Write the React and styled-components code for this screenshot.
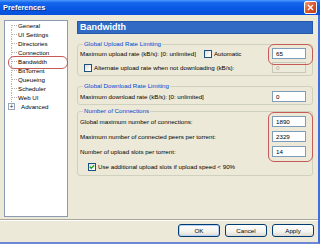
import React from 'react';
import styled, { createGlobalStyle } from 'styled-components';

const GlobalStyle = createGlobalStyle`
  html, body {
    margin: 0;
    padding: 0;
    background: #ECE9D8;
  }
  body {
    font-family: "Liberation Sans", Arial, sans-serif;
    font-size: 6.2px;
    color: #000;
  }
`;

const Window = styled.div`
  position: relative;
  width: 320px;
  height: 244px;
  display: flex;
  flex-direction: column;
  background: #ECE9D8;
  overflow: hidden;
`;

const TitleBar = styled.div`
  height: 15px;
  flex: none;
  display: flex;
  align-items: center;
  justify-content: space-between;
  padding: 0 3px 0 3px;
  box-sizing: border-box;
  background: linear-gradient(#4f9bff 0%, #1466ec 18%, #0a58e4 55%, #0650dc 100%);
  color: #fff;
  font-weight: bold;
  font-size: 7.4px;
  text-shadow: 1px 1px 0 #0a2f90;
`;

const CloseButton = styled.div`
  width: 11px;
  height: 11px;
  border: 1px solid #fff;
  border-radius: 2px;
  background: linear-gradient(135deg, #f0a07a 0%, #e0582e 45%, #c43c18 100%);
  display: flex;
  align-items: center;
  justify-content: center;
`;

const Body = styled.div`
  flex: 1;
  display: flex;
  flex-direction: column;
  border-right: 2px solid #3d6fe0;
  border-bottom: 2px solid #6d86d6;
`;

const Main = styled.div`
  display: flex;
  gap: 9px;
  padding: 5px 5px 0 4px;
`;

const Tree = styled.div`
  width: 64px;
  height: 197px;
  box-sizing: border-box;
  background: #fff;
  border: 1px solid #8b9ab3;
`;

const TreeItem = styled.div`
  height: 9px;
  display: flex;
  align-items: center;
  line-height: 9px;
  white-space: nowrap;
`;

const Branch = styled.span`
  position: relative;
  width: 6px;
  height: 9px;
  margin-left: 6px;
  margin-right: 1px;
  flex: none;
  &::before {
    content: "";
    position: absolute;
    left: 0;
    top: ${p => (p.$first ? '4px' : '0')};
    bottom: 0;
    border-left: 1px dotted #b4b4b4;
  }
  &::after {
    content: "";
    position: absolute;
    left: 1px;
    right: 0;
    top: 4px;
    border-top: 1px dotted #b4b4b4;
  }
`;

const PlusBox = styled.span`
  width: 7px;
  height: 7px;
  margin-left: 3px;
  margin-right: 6px;
  box-sizing: border-box;
  border: 1px solid #9aa5b8;
  background: #fff;
  display: flex;
  align-items: center;
  justify-content: center;
  font-size: 7px;
  line-height: 5px;
  color: #333;
  flex: none;
`;

const Content = styled.div`
  flex: 1;
  display: flex;
  flex-direction: column;
  padding-top: 1px;
`;

const Header = styled.div`
  height: 13px;
  background: #316ac5;
  border: 1px solid #2757a8;
  box-sizing: border-box;
  color: #fff;
  font-weight: bold;
  font-size: 9px;
  line-height: 11px;
  padding-left: 2px;
  margin-bottom: 6px;
`;

const Group = styled.fieldset`
  margin: 0 0 ${p => p.$after}px 0;
  padding: ${p => p.$top}px 0 ${p => p.$bottom}px 2px;
  border: 1px solid #d0d0bf;
  border-radius: 3px;
  display: flex;
  flex-direction: column;
  gap: ${p => p.$gap}px;
`;

const Legend = styled.legend`
  color: #0046d5;
  padding: 0 1px;
  margin-left: 3px;
  line-height: 8px;
  font-size: 6.2px;
`;

const Row = styled.div`
  height: 11px;
  display: flex;
  align-items: center;
  padding-left: ${p => p.$indent || 0}px;
`;

const Label = styled.span`
  white-space: nowrap;
`;

const Spacer = styled.span`
  flex: 1;
`;

const Check = styled.span`
  width: 8px;
  height: 8px;
  box-sizing: border-box;
  border: 1px solid #1c5180;
  background: linear-gradient(135deg, #dcdcd7 0%, #fff 80%);
  margin-right: 2px;
  flex: none;
  display: flex;
  align-items: center;
  justify-content: center;
`;

const Input = styled.div`
  width: 34px;
  height: 11px;
  box-sizing: border-box;
  border: 1px solid ${p => (p.$disabled ? '#c9c7ba' : '#7f9db9')};
  background: ${p => (p.$disabled ? '#ebeadb' : '#fff')};
  color: ${p => (p.$disabled ? '#aca899' : '#000')};
  padding-left: 3px;
  line-height: 9px;
  margin-right: 6px;
  flex: none;
`;

const AutoCheck = styled.span`
  display: flex;
  align-items: center;
  margin-left: 8px;
`;

const Footer = styled.div`
  margin-top: auto;
  border-top: 1px solid #aca899;
  box-shadow: inset 0 1px 0 #fff;
  display: flex;
  justify-content: flex-end;
  gap: 5px;
  padding: 4px 4px 5px 0;
`;

const Button = styled.button`
  width: 42px;
  height: 13px;
  padding: 0;
  border: 1px solid #003c74;
  border-radius: 3px;
  background: linear-gradient(#fff 0%, #f4f3ee 60%, #dcdad0 100%);
  font-family: "Liberation Sans", Arial, sans-serif;
  font-size: 6.2px;
  color: #000;
  box-shadow: ${p => (p.$default ? 'inset 0 0 0 1px #b8d0f6' : 'none')};
`;

const Mark = styled.div`
  position: absolute;
  border: 1.3px solid #c65a57;
  border-radius: 6px;
  pointer-events: none;
`;

const treeItems = ['General', 'UI Settings', 'Directories', 'Connection', 'Bandwidth', 'BitTorrent', 'Queueing', 'Scheduler', 'Web UI'];

const CheckMark = () => (
  <svg width="6" height="6" viewBox="0 0 6 6">
    <path d="M0.8 2.8 L2.3 4.3 L5.2 1.2" fill="none" stroke="#21a121" strokeWidth="1.3" />
  </svg>
);

const App = () => (
  <Window>
    <GlobalStyle />
    <TitleBar>
      <span>Preferences</span>
      <CloseButton>
        <svg width="7" height="7" viewBox="0 0 7 7">
          <path d="M1 1 L6 6 M6 1 L1 6" stroke="#fff" strokeWidth="1.4" />
        </svg>
      </CloseButton>
    </TitleBar>
    <Body>
      <Main>
        <Tree>
          {treeItems.map((t, i) => (
            <TreeItem key={t}>
              <Branch $first={i === 0} />
              {t}
            </TreeItem>
          ))}
          <TreeItem>
            <PlusBox>+</PlusBox>
            Advanced
          </TreeItem>
        </Tree>
        <Content>
          <Header>Bandwidth</Header>
          <Group $top={0} $bottom={2} $gap={3} $after={6}>
            <Legend>Global Upload Rate Limiting</Legend>
            <Row>
              <Label>Maximum upload rate (kB/s): [0: unlimited]</Label>
              <AutoCheck>
                <Check />
                <Label>Automatic</Label>
              </AutoCheck>
              <Spacer />
              <Input>65</Input>
            </Row>
            <Row $indent={4}>
              <Check />
              <Label>Alternate upload rate when not downloading (kB/s):</Label>
              <Spacer />
              <Input $disabled>0</Input>
            </Row>
          </Group>
          <Group $top={1} $bottom={2} $gap={3} $after={2}>
            <Legend>Global Download Rate Limiting</Legend>
            <Row>
              <Label>Maximum download rate (kB/s): [0: unlimited]</Label>
              <Spacer />
              <Input>0</Input>
            </Row>
          </Group>
          <Group $top={1} $bottom={3} $gap={4} $after={0}>
            <Legend>Number of Connections</Legend>
            <Row>
              <Label>Global maximum number of connections:</Label>
              <Spacer />
              <Input>1890</Input>
            </Row>
            <Row>
              <Label>Maximum number of connected peers per torrent:</Label>
              <Spacer />
              <Input>2329</Input>
            </Row>
            <Row>
              <Label>Number of upload slots per torrent:</Label>
              <Spacer />
              <Input>14</Input>
            </Row>
            <Row $indent={8}>
              <Check>
                <CheckMark />
              </Check>
              <Label>Use additional upload slots if upload speed &lt; 90%</Label>
            </Row>
          </Group>
        </Content>
      </Main>
      <Footer>
        <Button $default>OK</Button>
        <Button>Cancel</Button>
        <Button>Apply</Button>
      </Footer>
    </Body>
    <Mark style={{ left: 8, top: 56, width: 58, height: 11 }} />
    <Mark style={{ left: 268, top: 44, width: 43, height: 19 }} />
    <Mark style={{ left: 268, top: 112, width: 43, height: 48 }} />
  </Window>
);

export default App;
